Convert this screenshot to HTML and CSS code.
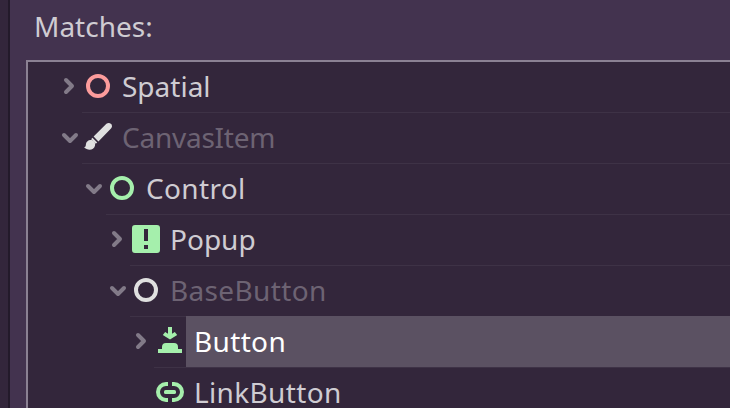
FILE: index.html
```html
<!DOCTYPE html>
<html lang="en">
<head>
    <meta charset="UTF-8">
    <title>Create New Node</title>
    <link rel="stylesheet" href="styles.css">
</head>
<body>
    <div class="dialog">
        <div class="label">Matches:</div>
        <div class="tree">
            <div class="row level-0">
                <svg class="arrow" viewBox="0 0 12 16"><path d="M4 5l3 3-3 3"/></svg>
                <div class="item">
                    <svg class="icon red" viewBox="0 0 16 16"><circle class="ring" cx="8" cy="8" r="5"/></svg>
                    <span class="name">Spatial</span>
                </div>
            </div>
            <div class="row level-0">
                <svg class="arrow" viewBox="0 0 12 16"><path d="M3 7l3 3 3-3"/></svg>
                <div class="item disabled">
                    <svg class="icon white" viewBox="0 0 16 16">
                        <path d="M12.2 1.4Q13 .8 14 1.1Q15.2 1.5 15 2.8Q14.9 3.4 14.5 3.8L8.2 10.2L5.8 7.8Z"/>
                        <path d="M5.2 8.4L7.6 10.8L6.9 11.4L4.6 9.1Z"/>
                        <path d="M4.2 9.5C5.8 9.4 6.9 10.8 6.5 12.4C5.9 14.8 2.6 15 1 13C1.9 13.2 1.8 12.6 2 11.4C2.2 10.3 3.1 9.6 4.2 9.5Z"/>
                    </svg>
                    <span class="name narrow">CanvasItem</span>
                </div>
            </div>
            <div class="row level-1">
                <svg class="arrow" viewBox="0 0 12 16"><path d="M3 7l3 3 3-3"/></svg>
                <div class="item">
                    <svg class="icon green" viewBox="0 0 16 16"><circle class="ring" cx="8" cy="8" r="5"/></svg>
                    <span class="name wide">Control</span>
                </div>
            </div>
            <div class="row level-2">
                <svg class="arrow" viewBox="0 0 12 16"><path d="M4 5l3 3-3 3"/></svg>
                <div class="item">
                    <svg class="icon green" viewBox="0 0 16 16"><path fill-rule="evenodd" d="M2.5 1h11A1.5 1.5 0 0 1 15 2.5v11a1.5 1.5 0 0 1-1.5 1.5h-11A1.5 1.5 0 0 1 1 13.5v-11A1.5 1.5 0 0 1 2.5 1zM7 3v6h2V3zM7 11v2h2v-2z"/></svg>
                    <span class="name">Popup</span>
                </div>
            </div>
            <div class="row level-2">
                <svg class="arrow" viewBox="0 0 12 16"><path d="M3 7l3 3 3-3"/></svg>
                <div class="item disabled">
                    <svg class="icon white" viewBox="0 0 16 16"><circle class="ring" cx="8" cy="8" r="5"/></svg>
                    <span class="name wide">BaseButton</span>
                </div>
            </div>
            <div class="row level-3">
                <svg class="arrow" viewBox="0 0 12 16"><path d="M4 5l3 3-3 3"/></svg>
                <div class="item selected">
                    <svg class="icon green" viewBox="0 0 16 16">
                        <path d="M7 1h2v3.4l1.4-.9 1.2 1.5L8 7.2 4.4 5l1.2-1.5 1.4.9z"/>
                        <path d="M2 12h2v-1a2 2 0 0 1 2-2h4a2 2 0 0 1 2 2v1h2v2H2z"/>
                    </svg>
                    <span class="name wide">Button</span>
                </div>
            </div>
            <div class="row level-3">
                <div class="arrow"></div>
                <div class="item">
                    <svg class="icon green" viewBox="0 0 16 16">
                        <path class="ring" d="M7 4H6a4 4 0 0 0 0 8h1M9 4h1a4 4 0 0 1 0 8H9"/>
                        <rect x="5" y="7" width="6" height="2" rx=".8"/>
                    </svg>
                    <span class="name wide">LinkButton</span>
                </div>
            </div>
        </div>
    </div>
</body>
</html>
```
FILE: styles.css
```css
* {
    box-sizing: border-box;
}

body {
    margin: 0;
    height: 408px;
    overflow: hidden;
    padding-left: 8px;
    background-color: #33263b;
    font-family: 'Noto Sans', sans-serif;
    font-size: 28px;
    color: #cfccd2;
}

.dialog {
    height: 408px;
    border-left: 2px solid #231a2a;
    padding-left: 16px;
    background-color: #43334f;
    display: flex;
    flex-direction: column;
}

.label {
    height: 60px;
    padding: 6px 0 0 8px;
    line-height: 40px;
    flex: none;
}

.tree {
    flex: 1;
    overflow: hidden;
    border-top: 2px solid #8b8193;
    border-left: 2px solid #8b8193;
    background-color: #33263b;
}

.row {
    display: flex;
    height: 51px;
}

.level-0 {
    padding-left: 30px;
}

.level-1 {
    padding-left: 54px;
}

.level-2 {
    padding-left: 78px;
}

.level-3 {
    padding-left: 102px;
}

.arrow {
    width: 24px;
    height: 32px;
    margin-top: 8px;
    flex: none;
    fill: none;
    stroke: #827a88;
    stroke-width: 2;
    stroke-linecap: round;
    stroke-linejoin: round;
}

.item {
    flex: 1;
    display: flex;
    border-bottom: 1px solid #3e3246;
}

.icon {
    width: 32px;
    height: 32px;
    margin-top: 8px;
    flex: none;
    fill: currentColor;
}

.ring {
    fill: none;
    stroke: currentColor;
    stroke-width: 2;
}

.name {
    flex: 1;
    padding-left: 8px;
    line-height: 48px;
}

.wide {
    letter-spacing: 0.35px;
}

.narrow {
    letter-spacing: -0.25px;
}

.red {
    color: #fc9c9c;
}

.green {
    color: #a5efac;
}

.white {
    color: #e0e0e0;
}

.disabled .name {
    color: #6d6373;
}

.selected .name {
    margin-top: -1px;
    line-height: 50px;
    color: #fff;
    background-color: #5b5162;
}
```
